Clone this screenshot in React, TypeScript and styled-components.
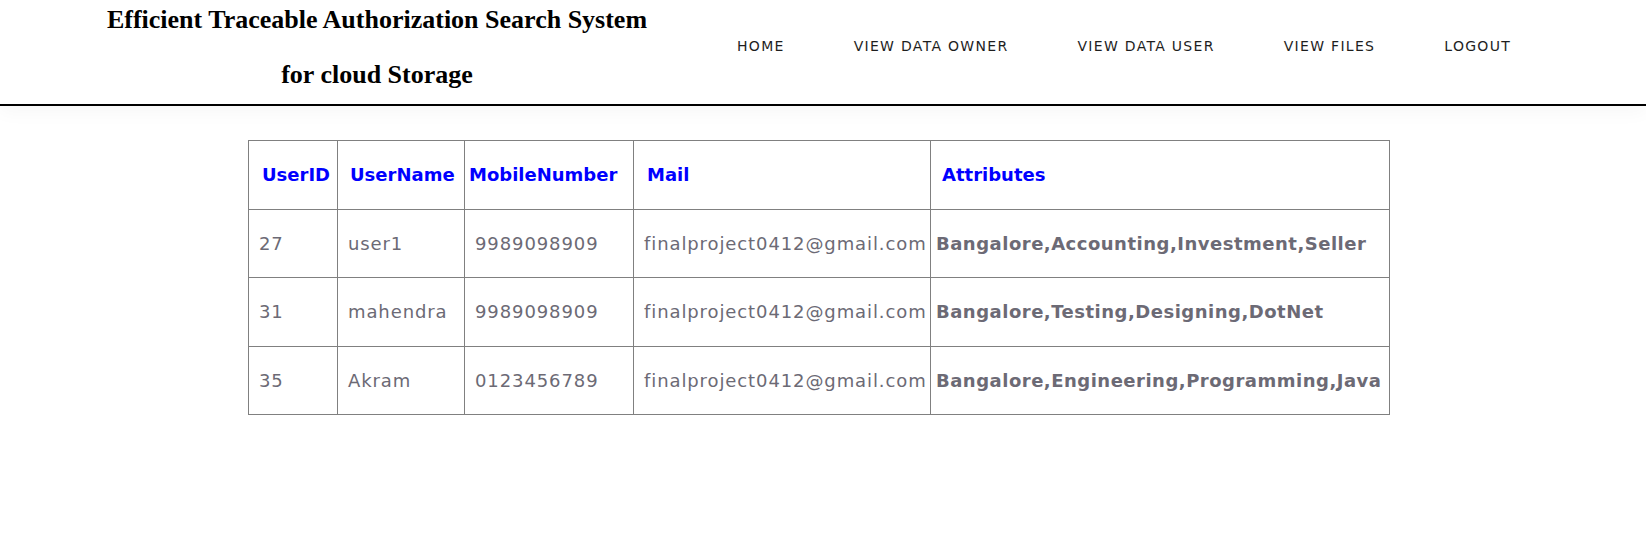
import React from "react";
import styled, { createGlobalStyle } from "styled-components";

const GlobalStyle = createGlobalStyle`
  html, body { margin: 0; padding: 0; background: #ffffff; }
  body { font-family: "DejaVu Sans", "Open Sans", sans-serif; }
`;

const Header = styled.header`
  position: relative;
  z-index: 1;
  display: flex;
  align-items: flex-start;
  height: 104px;
  background: #ffffff;
  border-bottom: 2px solid #000000;
  box-shadow: 0 6px 18px rgba(0, 0, 0, 0.035);
`;

const Title = styled.h1`
  width: 706px;
  margin: 0;
  padding: 6px 0 0 24px;
  font-family: "Liberation Serif", "Times New Roman", serif;
  font-weight: 700;
  font-size: 26px;
  line-height: 27.6px;
  text-align: center;
  color: #000000;
`;

const Nav = styled.nav`
  display: flex;
  gap: 69px;
  margin-left: 7px;
  padding-top: 37px;
`;

const NavLink = styled.a`
  font-family: "DejaVu Sans", "Open Sans", sans-serif;
  font-size: 14px;
  line-height: 18px;
  letter-spacing: 1.3px;
  color: #1e1e1e;
  text-decoration: none;
  text-transform: uppercase;
  white-space: nowrap;
`;

const Main = styled.main`
  padding: 34px 0 0 248px;
`;

const Table = styled.table`
  width: 1141px;
  border-collapse: collapse;
  table-layout: fixed;
`;

const HeadCell = styled.th<{ $pad: number }>`
  height: 67.5px;
  padding: 0 0 0 ${(p) => p.$pad}px;
  border: 1px solid #808080;
  text-align: left;
  vertical-align: middle;
  white-space: nowrap;
  font-family: "DejaVu Sans", sans-serif;
  font-weight: 700;
  font-size: 18px;
  color: #0000ff;
`;

const Cell = styled.td<{ $bold?: boolean; $pad: number }>`
  height: 67.5px;
  padding: 0 0 0 ${(p) => p.$pad}px;
  border: 1px solid #808080;
  vertical-align: middle;
  white-space: nowrap;
  font-family: "DejaVu Sans", sans-serif;
  font-size: 18px;
  font-weight: ${(p) => (p.$bold ? 700 : 400)};
  letter-spacing: ${(p) => (p.$bold ? "0.5px" : "0.9px")};
  color: #6c6a75;
`;

const columns = [
  { label: "UserID", width: 89, headPad: 13 },
  { label: "UserName", width: 127, headPad: 12 },
  { label: "MobileNumber", width: 169, headPad: 4 },
  { label: "Mail", width: 297, headPad: 13 },
  { label: "Attributes", width: 459, headPad: 11 },
];

const rows = [
  ["27", "user1", "9989098909", "finalproject0412@gmail.com", "Bangalore,Accounting,Investment,Seller"],
  ["31", "mahendra", "9989098909", "finalproject0412@gmail.com", "Bangalore,Testing,Designing,DotNet"],
  ["35", "Akram", "0123456789", "finalproject0412@gmail.com", "Bangalore,Engineering,Programming,Java"],
];

const navItems = ["Home", "View Data Owner", "View Data User", "View Files", "Logout"];

export default function App() {
  return (
    <>
      <GlobalStyle />
      <Header>
        <Title>
          Efficient Traceable Authorization Search System
          <br />
          <br />
          for cloud Storage
        </Title>
        <Nav>
          {navItems.map((item) => (
            <NavLink key={item} href="#">
              {item}
            </NavLink>
          ))}
        </Nav>
      </Header>
      <Main>
        <Table>
          <colgroup>
            {columns.map((c) => (
              <col key={c.label} style={{ width: c.width }} />
            ))}
          </colgroup>
          <thead>
            <tr>
              {columns.map((c) => (
                <HeadCell key={c.label} $pad={c.headPad}>
                  {c.label}
                </HeadCell>
              ))}
            </tr>
          </thead>
          <tbody>
            {rows.map((r) => (
              <tr key={r[0]}>
                {r.map((v, i) => (
                  <Cell key={i} $pad={i === 4 ? 5 : 10} $bold={i === 4}>
                    {v}
                  </Cell>
                ))}
              </tr>
            ))}
          </tbody>
        </Table>
      </Main>
    </>
  );
}
